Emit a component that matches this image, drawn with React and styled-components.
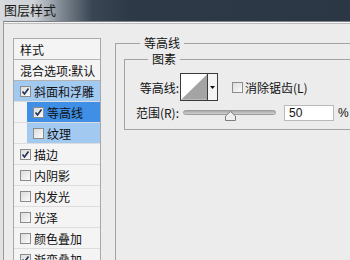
import React from 'react'
import styled, { createGlobalStyle } from 'styled-components'

const Global = createGlobalStyle`
  html, body {
    margin: 0;
    padding: 0;
    background: #e4e4e4;
  }
  body {
    width: 350px;
    height: 260px;
    overflow: hidden;
    font-family: "Noto Sans CJK SC", "Noto Sans", sans-serif;
    font-size: 12px;
    color: #111;
  }
`

const Window = styled.div`
  width: 350px;
  height: 260px;
  overflow: hidden;
  display: flex;
  flex-direction: column;
  background: #e2e2e2;
`

const TitleBar = styled.div`
  height: 21px;
  flex: none;
  box-sizing: border-box;
  padding: 2px 0 0 4px;
  font-size: 13px;
  line-height: 16px;
  color: #1a1a1a;
  background: linear-gradient(to right, #d6dadd 0, #cdd1d5 34px, #7d8791 62px, #3a4654 92px, #2d3947 130px, #2b3745 100%);
`

const Frame = styled.div`
  flex: 1;
  display: flex;
  margin-left: 3px;
  padding: 16px 0 0 9px;
  border-top: 1px solid #7c8288;
  border-left: 1px solid #9a9a9a;
  box-shadow: inset 0 1px 0 #f6f6f6, inset 0 2px 0 #bdbdbd;
  background: #ececec;
  min-height: 0;
`

const List = styled.div`
  width: 86px;
  flex: none;
  border: 1px solid #a9a9a9;
  background: #f2f2f2;
  align-self: flex-start;
`

const Row = styled.div`
  height: 20px;
  border-bottom: 1px solid ${p => (p.$strong ? '#b4b4b4' : '#dddddd')};
  display: flex;
  background: #f4f4f4;
`

const Cell = styled.div`
  flex: 1;
  display: flex;
  align-items: center;
  gap: 3px;
  margin-left: ${p => (p.$indent ? '13px' : '0')};
  padding-left: 6px;
  white-space: nowrap;
  background: ${p =>
    p.$tone === 'active' ? '#3f8fe6' : p.$tone === 'light' ? '#a2c9f0' : 'transparent'};
`

const Box = styled.span`
  width: 11px;
  height: 11px;
  flex: none;
  box-sizing: border-box;
  border: 1px solid #8c8c8c;
  background: linear-gradient(135deg, #dcdcdc, #fbfbfb);
  display: flex;
  align-items: center;
  justify-content: center;
`

const Check = ({ on }) => (
  <Box>
    {on && (
      <svg width="9" height="9" viewBox="0 0 9 9">
        <path d="M1.5 4.5 L3.5 7 L7.5 1.5" stroke="#1f2f52" strokeWidth="1.6" fill="none" />
      </svg>
    )}
  </Box>
)

const Panel = styled.div`
  flex: 1;
  margin-top: -2px;
  padding-left: 14px;
  min-width: 0;
`

const Group = styled.fieldset`
  margin: 0;
  padding: ${p => p.$pad};
  border: 1px solid #a3a3a3;
  width: ${p => p.$w}px;
  height: ${p => (p.$h ? `${p.$h}px` : 'auto')};
  box-sizing: border-box;
`

const Legend = styled.legend`
  margin-left: ${p => p.$ml}px;
  padding: 0 4px;
  font-size: 12px;
  line-height: 14px;
  color: #111;
`

const FieldRow = styled.div`
  display: flex;
  align-items: center;
  margin-top: ${p => p.$mt}px;
`

const Label = styled.span`
  width: 45px;
  text-align: right;
  flex: none;
  white-space: nowrap;
`

const Swatch = styled.div`
  width: 38px;
  height: 28px;
  box-sizing: border-box;
  margin-left: 1px;
  border: 1px solid #3a3a3a;
  display: flex;
  background: #fff;
`

const Arrow = styled.div`
  width: 9px;
  border-left: 1px solid #3a3a3a;
  background: #f4f4f4;
  display: flex;
  align-items: center;
  justify-content: center;
`

const CheckLabel = styled.label`
  display: flex;
  align-items: center;
  gap: 2px;
  margin-left: 14px;
  white-space: nowrap;
`

const Track = styled.div`
  position: relative;
  width: 93px;
  height: 5px;
  margin-left: 4px;
  border: 1px solid #9d9d9d;
  border-radius: 3px;
  background: linear-gradient(#a9a9a9, #d0d0d0);
  box-sizing: border-box;
`

const Thumb = styled.svg`
  position: absolute;
  left: 41px;
  top: 0px;
`

const Input = styled.div`
  width: 50px;
  height: 16px;
  box-sizing: border-box;
  margin-left: 8px;
  padding-left: 4px;
  border: 1px solid #b9b9b9;
  background: #fff;
  font-family: "Liberation Sans", Arial, sans-serif;
  font-size: 12px;
  line-height: 14px;
`

const Unit = styled.span`
  margin-left: 4px;
  font-family: "Liberation Sans", Arial, sans-serif;
`

const items = [
  { text: '样式', strong: true },
  { text: '混合选项:默认', strong: true },
  { text: '斜面和浮雕', check: true, on: true, tone: 'light' },
  { text: '等高线', check: true, on: true, tone: 'active', indent: true },
  { text: '纹理', check: true, tone: 'light', indent: true },
  { text: '描边', check: true, on: true },
  { text: '内阴影', check: true },
  { text: '内发光', check: true },
  { text: '光泽', check: true },
  { text: '颜色叠加', check: true },
  { text: '渐变叠加', check: true, on: true },
  { text: '图案叠加', check: true },
]

export default function App() {
  return (
    <Window>
      <Global />
      <TitleBar>图层样式</TitleBar>
      <Frame>
        <List>
          {items.map(it => (
            <Row key={it.text} $strong={it.strong}>
              <Cell $indent={it.indent} $tone={it.tone}>
                {it.check && <Check on={it.on} />}
                <span>{it.text}</span>
              </Cell>
            </Row>
          ))}
        </List>
        <Panel>
          <Group $w={260} $h={240} $pad="2px 0 0 8px">
            <Legend $ml={16}>等高线</Legend>
            <Group $w={250} $pad="0 0 8px 9px">
              <Legend $ml={14}>图素</Legend>
              <FieldRow $mt={7}>
                <Label>等高线:</Label>
                <Swatch>
                  <svg width="27" height="26" viewBox="0 0 27 26">
                    <polygon points="0,26 27,0 27,26" fill="#a4a4a4" />
                  </svg>
                  <Arrow>
                    <svg width="5" height="3" viewBox="0 0 5 3">
                      <polygon points="0,0 5,0 2.5,3" fill="#111" />
                    </svg>
                  </Arrow>
                </Swatch>
                <CheckLabel>
                  <Check />
                  <span>消除锯齿(L)</span>
                </CheckLabel>
              </FieldRow>
              <FieldRow $mt={3}>
                <Label>范围(R):</Label>
                <Track>
                  <Thumb width="11" height="10" viewBox="0 0 11 10">
                    <path d="M5.5 0.5 L10.5 5 L10.5 9.5 L0.5 9.5 L0.5 5 Z" fill="#eeeeee" stroke="#7d7d7d" />
                  </Thumb>
                </Track>
                <Input>50</Input>
                <Unit>%</Unit>
              </FieldRow>
            </Group>
          </Group>
        </Panel>
      </Frame>
    </Window>
  )
}
